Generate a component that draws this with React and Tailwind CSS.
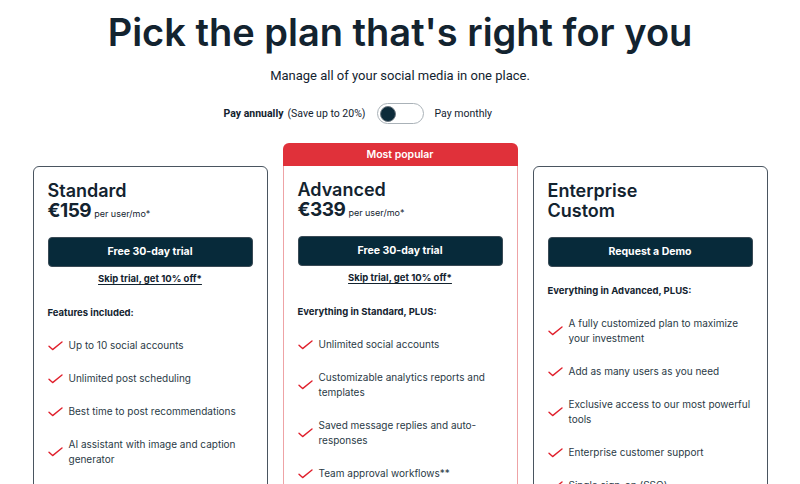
import { useState } from "react";

const plans = [
  {
    name: "Standard",
    price: "€159",
    cta: "Free 30-day trial",
    skip: true,
    lead: "Features included:",
    items: [
      "Up to 10 social accounts",
      "Unlimited post scheduling",
      "Best time to post recommendations",
      "AI assistant with image and caption generator",
    ],
  },
  {
    name: "Advanced",
    price: "€339",
    cta: "Free 30-day trial",
    skip: true,
    popular: true,
    lead: "Everything in Standard, PLUS:",
    items: [
      "Unlimited social accounts",
      "Customizable analytics reports and templates",
      "Saved message replies and auto-responses",
      "Team approval workflows**",
    ],
  },
  {
    name: "Enterprise",
    custom: true,
    cta: "Request a Demo",
    lead: "Everything in Advanced, PLUS:",
    items: [
      "A fully customized plan to maximize your investment",
      "Add as many users as you need",
      "Exclusive access to our most powerful tools",
      "Enterprise customer support",
      "Single sign-on (SSO)",
    ],
  },
];

function Check() {
  return (
    <svg className="w-[15px] h-[10px] shrink-0" viewBox="0 0 15 10" fill="none">
      <path d="M1 5.2 L4.6 8.6 L14 1" stroke="#e0202c" strokeWidth="1.4" strokeLinecap="round" strokeLinejoin="round" />
    </svg>
  );
}

function PlanCard({ plan }) {
  return (
    <div className="flex flex-col">
      {plan.popular && (
        <div className="h-[23px] bg-[#e0313a] rounded-t-md flex items-center justify-center text-white text-[10.5px] font-semibold">
          Most popular
        </div>
      )}
      <div
        className={`h-[400px] px-[14px] pt-[14px] ${
          plan.popular
            ? "border border-t-0 border-[#eea3a6]"
            : "border border-[#4a5560] rounded-t-md"
        }`}
      >
        {/* heading + price */}
        <div className="h-[20px] text-[18px] leading-[20px] font-semibold text-[#13232f]">{plan.name}</div>
        {plan.custom ? (
          <div className="h-[20px] text-[18px] leading-[20px] font-semibold text-[#13232f]">Custom</div>
        ) : (
          <div className="h-[20px] flex items-baseline gap-[3px] leading-[20px]">
            <span className="text-[19px] font-bold text-[#13232f] tracking-[-0.5px]">{plan.price}</span>
            <span className="text-[9px] text-[#13232f]">per user/mo*</span>
          </div>
        )}

        <button className="mt-[16px] block w-full h-[30px] rounded-[4px] bg-[#072a3a] border border-[#3a4a55] text-white text-[10.5px] font-bold">
          {plan.cta}
        </button>

        {plan.skip && (
          <div className="mt-[2px] h-[14px] text-center leading-[14px]">
            <span className="text-[9.5px] font-bold text-[#13232f] underline underline-offset-2">
              Skip trial, get 10% off*
            </span>
          </div>
        )}

        <div
          className={`${plan.skip ? "mt-[22px]" : "mt-[16px]"} h-[15px] text-[9.5px] leading-[15px] font-bold text-[#13232f]`}
        >
          {plan.lead}
        </div>

        <ul className="mt-[18px] flex flex-col gap-[18px]">
          {plan.items.map((item) => (
            <li key={item} className="flex items-center gap-[6px]">
              <Check />
              <span className="text-[10px] leading-[15px] text-[#2a3a46]">{item}</span>
            </li>
          ))}
        </ul>
      </div>
    </div>
  );
}

function App() {
  const [monthly, setMonthly] = useState(false);

  return (
    <div
      className="w-[800px] h-[484px] overflow-hidden bg-white flex flex-col items-center"
      style={{ fontFamily: "Inter, 'Noto Sans', sans-serif" }}
    >
      <h1 className="mt-[8px] text-[38px] leading-[48px] font-semibold text-[#13232f]">
        Pick the plan that's right for you
      </h1>
      <p
        className="mt-[11px] text-[13px] leading-[18px] text-[#13232f]"
        style={{ fontFamily: "Roboto, sans-serif" }}
      >
        Manage all of your social media in one place.
      </p>

      <div
        className="mt-[18px] w-full grid grid-cols-[1fr_47px_1fr] gap-[11px] items-center text-[10.5px] text-[#13232f]"
        style={{ fontFamily: "Roboto, sans-serif" }}
      >
        <div className="flex justify-end">
          <span className="font-bold">Pay annually</span>
          <span className="ml-[4px]">(Save up to 20%)</span>
        </div>
        <button
          onClick={() => setMonthly((m) => !m)}
          className={`w-[47px] h-[21px] rounded-full border border-[#aab2b8] bg-white flex items-center px-[2px] ${
            monthly ? "justify-end" : "justify-start"
          }`}
        >
          <span className="w-[16px] h-[16px] rounded-full bg-[#0d2b3a] border border-[#6b7780]" />
        </button>
        <span>Pay monthly</span>
      </div>

      <div className="mt-[19px] w-[735px] grid grid-cols-3 gap-[15px] items-end">
        {plans.map((p) => (
          <PlanCard key={p.name} plan={p} />
        ))}
      </div>
    </div>
  );
}

export default App;
